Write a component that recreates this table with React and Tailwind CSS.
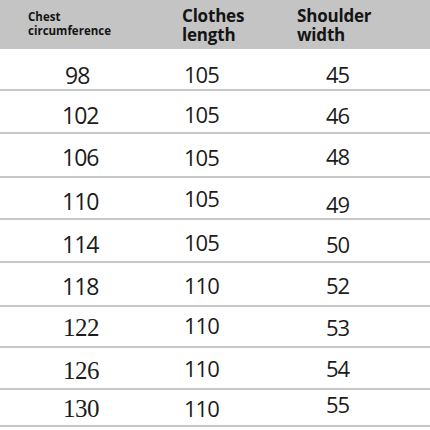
import React from "react";

const rows = [
  { a: "98", b: "105", c: "45", h: "h-[42px]", pa: "pt-[15px] pl-[65px]", pb: "pt-[14px]", pc: "pt-[14px]", serif: false },
  { a: "102", b: "105", c: "46", h: "h-[43px]", pa: "pt-[13px] pl-[62px]", pb: "pt-[12px]", pc: "pt-[13px]", serif: false },
  { a: "106", b: "105", c: "48", h: "h-[44px]", pa: "pt-[12px] pl-[62px]", pb: "pt-[12px]", pc: "pt-[11px]", serif: false },
  { a: "110", b: "105", c: "49", h: "h-[42px]", pa: "pt-[12px] pl-[62px]", pb: "pt-[9px]", pc: "pt-[15px]", serif: false },
  { a: "114", b: "105", c: "50", h: "h-[43px]", pa: "pt-[13px] pl-[62px]", pb: "pt-[11px]", pc: "pt-[13px]", serif: false },
  { a: "118", b: "110", c: "52", h: "h-[44px]", pa: "pt-[12px] pl-[62px]", pb: "pt-[11px]", pc: "pt-[11px]", serif: false },
  { a: "122", b: "110", c: "53", h: "h-[41px]", pa: "pt-[8px] pl-[63px]", pb: "pt-[7px]", pc: "pt-[9px]", serif: true },
  { a: "126", b: "110", c: "54", h: "h-[42px]", pa: "pt-[10px] pl-[63px]", pb: "pt-[9px]", pc: "pt-[9px]", serif: true },
  { a: "130", b: "110", c: "55", h: "h-[37px]", pa: "pt-[6px] pl-[63px]", pb: "pt-[7px]", pc: "pt-[3px]", serif: true },
];

const sans = "font-['Open_Sans',sans-serif]";

export default function App() {
  return (
    <div className={`w-[430px] h-[430px] bg-white text-[#1c1c1c] overflow-hidden ${sans}`}>
      <div className="flex h-[49px] bg-[#c4c4c4] font-bold text-[#141414]">
        <div className="w-[182px] pl-[28px] pt-[10px] text-[11.5px] leading-[13.5px]">
          <div>Chest</div>
          <div>circumference</div>
        </div>
        <div className="w-[115px] pt-[6px] text-[17px] leading-[19px] tracking-[-0.2px]">
          <div>Clothes</div>
          <div>length</div>
        </div>
        <div className="flex-1 pt-[6px] text-[17px] leading-[19px] tracking-[-0.2px]">
          <div>Shoulder</div>
          <div>width</div>
        </div>
      </div>
      {rows.map((r) => (
        <div key={r.a} className={`flex border-b-2 border-[#c8c8c8] ${r.h}`}>
          <div
            className={`w-[184px] leading-none ${r.pa} ${
              r.serif
                ? "font-['Liberation_Serif',serif] text-[25px] tracking-[-0.5px]"
                : "text-[23px] tracking-[-1px]"
            }`}
          >
            {r.a}
          </div>
          <div className={`w-[142px] leading-none text-[22px] tracking-[-1px] ${r.pb}`}>{r.b}</div>
          <div className={`flex-1 leading-none text-[22px] tracking-[-1px] ${r.pc}`}>{r.c}</div>
        </div>
      ))}
    </div>
  );
}
